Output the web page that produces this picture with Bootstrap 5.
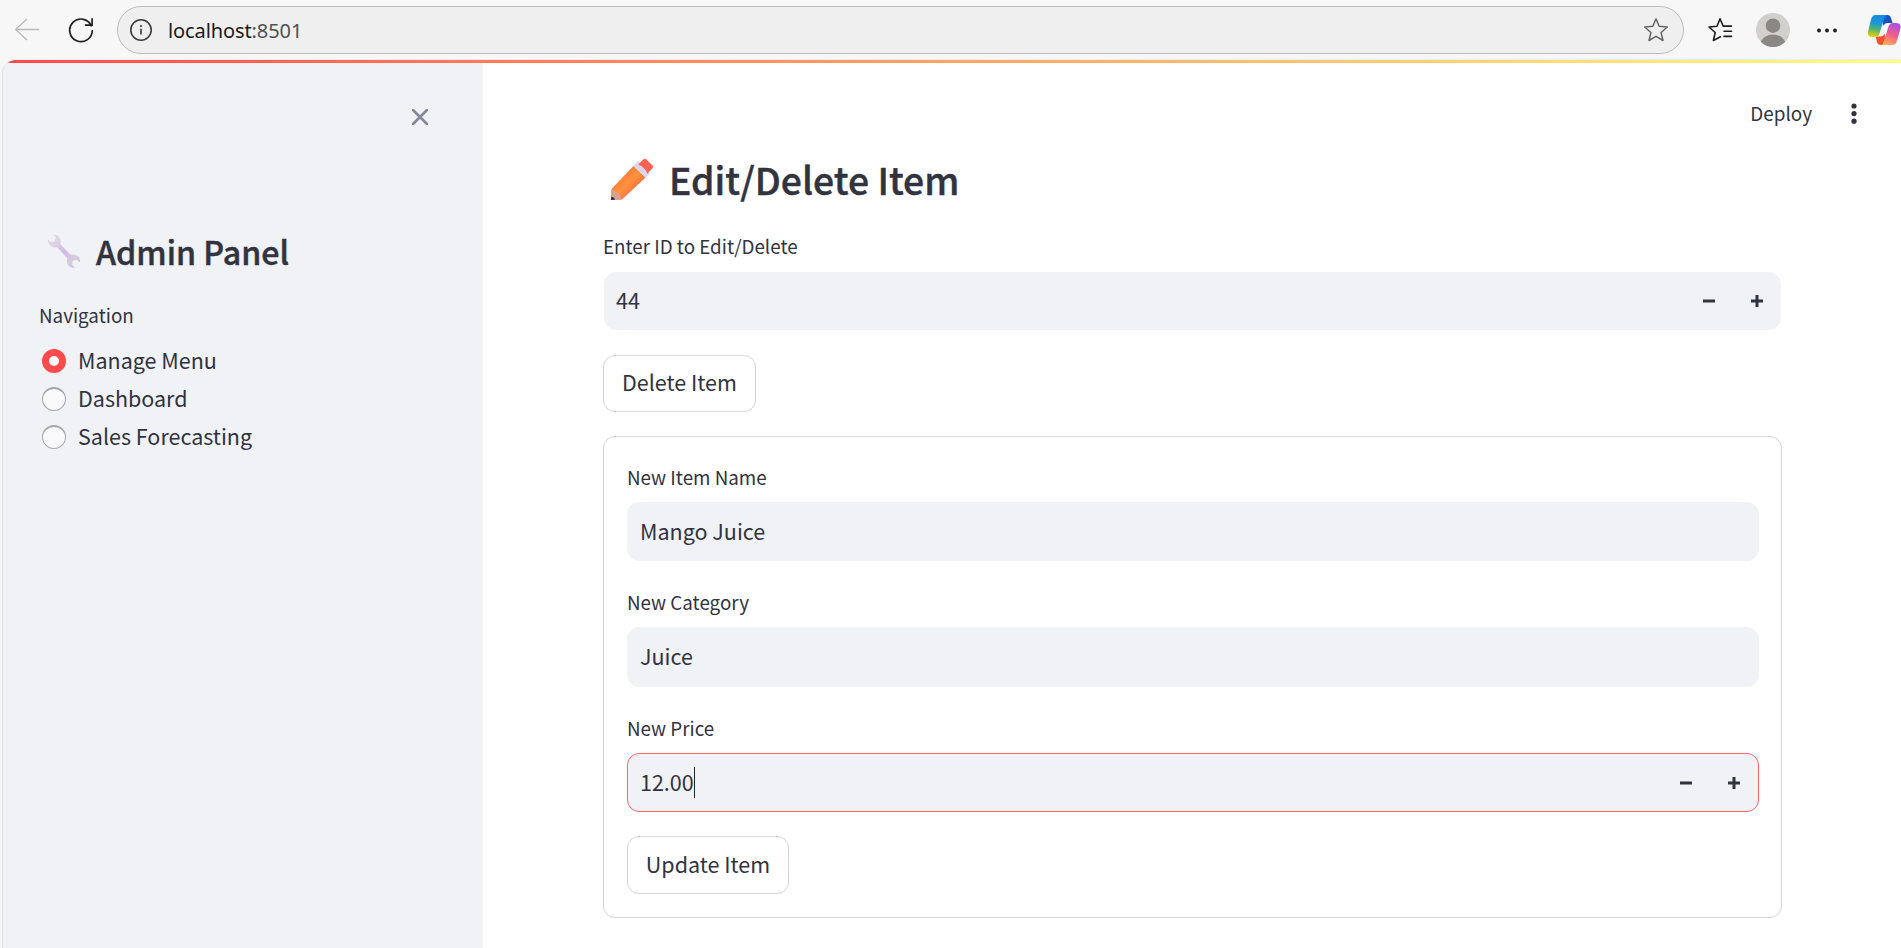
<!DOCTYPE html>
<html lang="en">
<head>
<meta charset="utf-8">
<meta name="viewport" content="width=device-width, initial-scale=1">
<title>Admin Panel</title>
<link href="https://cdn.jsdelivr.net/npm/bootstrap@5.3.0/dist/css/bootstrap.min.css" rel="stylesheet">
<script src="https://cdn.jsdelivr.net/npm/bootstrap@5.3.0/dist/js/bootstrap.bundle.min.js" defer></script>
<style>
:root{--ink:#31333f;--soft:#f0f2f6;--accent:#ff4b4b;--edge:#d5d6d8}
body{font-family:"Noto Sans CJK SC",sans-serif;color:var(--ink);background:#f7f7f7;font-size:21.5px;line-height:36px}
svg{display:block;flex:none}
.browser-bar{height:60px;padding-left:14px}
.reload{margin-left:28px}
.address{width:1567px;height:48px;margin:6px 23px 6px 23px;border:1.500px solid #bcbdbc;border-radius:24px;background:#efefef;padding:0 14px 0 11px}
.address .url{font-family:"Noto Sans",sans-serif;font-size:20px;letter-spacing:-.1px;line-height:28px;color:#1b1b1b;margin:2px 0 0 15px}
.address .port{color:#505050}
.account{margin-left:23px}
.more{margin-left:26px}
.copilot{margin-left:29px}
.page-view{height:888px;margin-left:2px;border-left:1px solid #e0e0e3;border-radius:14px 0 0 0;background:#fff;box-shadow:0 -1px 0 #ebebef}
.top-line{height:3px;background:linear-gradient(90deg,#ff4b4b,#fffd80)}
.side{width:480px;background:var(--soft);padding:46px 55px 0 36px}
.side h1{font-size:32.2px;line-height:44px;font-weight:500;margin:104px 0 0 9px}
.side h1,.main-col h2{-webkit-text-stroke:.45px var(--ink)}
.side h1 svg{margin-right:16px}
.nav-title{margin:26px 0 11px 0}
.field-name{font-size:18.8px;line-height:32px;display:block}
.choice{height:38px}
.choice span{margin-top:-3px}
.radio-mark{width:24px;height:24px;border-radius:50%;border:1.5px solid #a3a5ad;border-top-width:2px;background:#f9f9fb;margin:0 12px 0 3px}
.radio-mark.on{border:7.5px solid var(--accent);background:#fff}
.main-area{padding-top:32px}
.tools{padding-right:43px;gap:38px;font-size:18.9px}
.main-col{width:1179px;margin-left:120px}
.main-col h2{font-size:37.3px;line-height:54px;font-weight:500;margin:21px 0 24px 8px}
.main-col h2 svg{margin-right:16px}
.entry{background:var(--soft);border:1px solid var(--soft);border-radius:12px;padding:0 17px 0 12px;height:59px}
.entry span{margin-top:-2px}
.entry.id-entry{height:58px;margin:10px 1px 25px;padding-left:11px}
.entry.name-entry{margin:9px 0 25px}
.entry.kind-entry{height:60px;margin:9px 0 25px}
.entry.price-entry{border-color:#ff6468;margin:9px 0 24px;padding-right:18px}
.steps{gap:36px}
.outline-btn{border:1px solid var(--edge);border-radius:12px;background:#fff;height:57px;width:153px;padding:0 0 3px;color:var(--ink);display:block}
.update-btn{width:162px;height:58px}
.edit-form{border:1px solid var(--edge);border-radius:12px;padding:24px 22px 23px 23px;margin-top:24px}
.caret{width:1px;height:31px;background:#222}
</style>
</head>
<body class="overflow-hidden">
<header class="browser-bar d-flex align-items-center">
  <svg width="26" height="24" viewBox="0 0 26 24" fill="none" stroke="#b8b8b8" stroke-width="1.3"><path d="M25 11.500H2M13 1 1.700 11.500 13 22"/></svg>
  <svg class="reload" width="26" height="26" viewBox="0 0 26 26" fill="none" stroke="#1f1f1f" stroke-width="1.7"><path d="M23.600 9.400A11.300 11.300 0 1 0 24.300 13M24.100 1.200v6.900h-7.200"/></svg>
  <div class="address d-flex align-items-center flex-shrink-0">
    <svg width="24" height="24" viewBox="0 0 24 24" fill="none" stroke="#3b3b3b" stroke-width="1.6"><circle cx="12" cy="12" r="10.200"/><path d="M12 10.800v5.700"/><circle cx="12" cy="8" r="1.100" fill="#3b3b3b" stroke="none"/></svg>
    <div class="url flex-grow-1">localhost<span class="port">:8501</span></div>
    <svg width="26" height="26" viewBox="0 0 26 26" fill="none" stroke="#666" stroke-width="1.500" stroke-linejoin="round"><path d="M13 1.800 16.200 9.300 24.300 10 18.100 15.500 20 23.500 13 19.300 6 23.500 7.900 15.500 1.700 10 9.800 9.300Z"/></svg>
  </div>
  <svg width="26" height="26" viewBox="0 0 26 26" fill="none" stroke="#1f1f1f" stroke-width="1.600" stroke-linecap="round" stroke-linejoin="round"><path d="M13.500 19.800 6.400 23.500 8.200 15.500 2 10 10 9.300 13 1.800 16.200 9.100H24.500M17 14.200h7.500M17 19.400h7.500"/></svg>
  <svg class="account" width="34" height="34" viewBox="0 0 34 34"><defs><clipPath id="disc"><circle cx="17" cy="17" r="17"/></clipPath></defs><circle cx="17" cy="17" r="17" fill="#d2d0cd"/><g clip-path="url(#disc)" fill="#8b8785"><circle cx="17" cy="12.700" r="7.300"/><ellipse cx="17" cy="33" rx="13" ry="11.500"/></g></svg>
  <svg class="more" width="22" height="6" viewBox="0 0 22 6" fill="#1f1f1f"><circle cx="3" cy="3.500" r="1.900"/><circle cx="11" cy="3.500" r="1.900"/><circle cx="19" cy="3.500" r="1.900"/></svg>
  <svg class="copilot" width="34" height="32" viewBox="0 0 34 32">
    <defs>
      <linearGradient id="cool" x1=".5" y1="0" x2=".35" y2="1"><stop offset="0" stop-color="#1a86e8"/><stop offset=".4" stop-color="#1a9bd0"/><stop offset=".68" stop-color="#5cb765"/><stop offset="1" stop-color="#f2cf0b"/></linearGradient>
      <linearGradient id="warm" x1=".7" y1="0" x2=".3" y2="1"><stop offset="0" stop-color="#a452e6"/><stop offset=".5" stop-color="#f05c8c"/><stop offset="1" stop-color="#ffac5a"/></linearGradient>
      <linearGradient id="fold" x1="0" y1="0" x2="1" y2="1"><stop offset="0" stop-color="#1267d8"/><stop offset="1" stop-color="#1a3fae"/></linearGradient>
    </defs>
    <path d="M14 1h6.500q2.600 0 3.500 3l1.500 5h-5q-3 0-4 3Z" fill="url(#fold)"/>
    <path d="M20 31h-6.500q-2.600 0-3.500-3L8.500 22.500h5q3 0 4-3Z" fill="#f0532d"/>
    <path d="M8.500 1h11.200q-1.700 1-2.700 4l-4.300 14q-1.200 4-4.700 4H5q-5 0-4-5.500L4 5.500Q5.200 1 8.500 1Z" fill="url(#cool)"/>
    <path d="M25.500 31H14.300q1.700-1 2.700-4l4.300-14q1.200-4 4.700-4h3q5.500 0 4.400 5.500L30 26.500Q28.800 31 25.500 31Z" fill="url(#warm)"/>
  </svg>
</header>
<div class="page-view overflow-hidden d-flex flex-column">
  <div class="top-line"></div>
  <div class="d-flex flex-grow-1">
    <aside class="side flex-shrink-0">
      <svg class="ms-auto" width="16" height="16" viewBox="0 0 16 16" stroke="#85869b" stroke-width="2.600" stroke-linecap="round"><path d="m1 1 14 14M15 1 1 15"/></svg>
      <h1 class="d-flex align-items-center">
        <svg width="32" height="34" viewBox="0 0 32 34"><defs><linearGradient id="steel" x1="0" y1="0" x2="1" y2="1"><stop offset="0" stop-color="#dfdce2"/><stop offset=".25" stop-color="#dbd4e2"/><stop offset=".5" stop-color="#cdbbe6"/><stop offset=".75" stop-color="#d6cadf"/><stop offset="1" stop-color="#c9c3d0"/></linearGradient></defs><path d="M5 .500Q10 .200 12 4.500q1.200 2.700.200 5.500L22.500 20.700q5.500-1 8.300 2.300 1.700 2.500 1 5.300l-3.600-2.600-3.700 1.200-.3 4 2.800 2.600q-5.500.800-7.500-3.200-1.200-2.700-.2-6L9.200 13.300Q4 14.200 1.200 10.500-.3 8-.1 5.500l3 2.600 4-.8.900-4Z" fill="url(#steel)"/></svg>
        <span>Admin Panel</span>
      </h1>
      <div class="field-name nav-title">Navigation</div>
      <div class="choice d-flex align-items-center"><i class="radio-mark on"></i><span>Manage Menu</span></div>
      <div class="choice d-flex align-items-center"><i class="radio-mark"></i><span>Dashboard</span></div>
      <div class="choice d-flex align-items-center"><i class="radio-mark"></i><span>Sales Forecasting</span></div>
    </aside>
    <main class="main-area flex-grow-1">
      <div class="tools d-flex justify-content-end align-items-center">
        <span>Deploy</span>
        <svg width="8" height="22" viewBox="0 0 8 22" fill="#31333f"><circle cx="4" cy="4" r="2.600"/><circle cx="4" cy="11.600" r="2.600"/><circle cx="4" cy="19.200" r="2.600"/></svg>
      </div>
      <div class="main-col">
        <h2 class="d-flex align-items-center">
          <svg width="42" height="42" viewBox="0 0 42 42"><defs><linearGradient id="wood" x1="0" y1="0" x2="1" y2="1"><stop offset=".25" stop-color="#f9763c"/><stop offset=".5" stop-color="#ff923c"/><stop offset=".8" stop-color="#f9623f"/></linearGradient></defs><path d="M22.500 8 .500 31 0 42 11 41.500 34.500 19.500Z" fill="url(#wood)"/><path d="M.500 31 0 42l11-.5L7 34.500Z" fill="#dca08f"/><path d="M.200 38.500 0 42l4-.200-1.200-2.400Z" fill="#4c234e"/><path d="m22.500 8 4.700-4.800 11.800 12-4.500 4.300Z" fill="#dcd5ec"/><path d="m27.200 6.500 5-5.100q1.500-1.500 3.300.1l5.500 5.600q1.800 1.600.2 3.400l-4.900 5.200Q34.500 9.500 27.200 6.500Z" fill="#ff6250"/></svg>
          <span>Edit/Delete Item</span>
        </h2>
        <label class="field-name">Enter ID to Edit/Delete</label>
        <div class="entry id-entry d-flex align-items-center justify-content-between"><span>44</span>
          <div class="steps d-flex"><svg width="12" height="12" stroke="#31333f" stroke-width="3"><path d="M0 6h12"/></svg><svg width="12" height="12" stroke="#31333f" stroke-width="3"><path d="M0 6h12M6 0v12"/></svg></div>
        </div>
        <button class="outline-btn" type="button">Delete Item</button>
        <form class="edit-form">
          <label class="field-name">New Item Name</label>
          <div class="entry name-entry d-flex align-items-center"><span>Mango Juice</span></div>
          <label class="field-name">New Category</label>
          <div class="entry kind-entry d-flex align-items-center"><span>Juice</span></div>
          <label class="field-name">New Price</label>
          <div class="entry price-entry d-flex align-items-center"><span>12.00</span><i class="caret"></i>
            <div class="steps d-flex ms-auto"><svg width="12" height="12" stroke="#31333f" stroke-width="3"><path d="M0 6h12"/></svg><svg width="12" height="12" stroke="#31333f" stroke-width="3"><path d="M0 6h12M6 0v12"/></svg></div>
          </div>
          <button class="outline-btn update-btn" type="button">Update Item</button>
        </form>
      </div>
    </main>
  </div>
</div>
</body>
</html>
